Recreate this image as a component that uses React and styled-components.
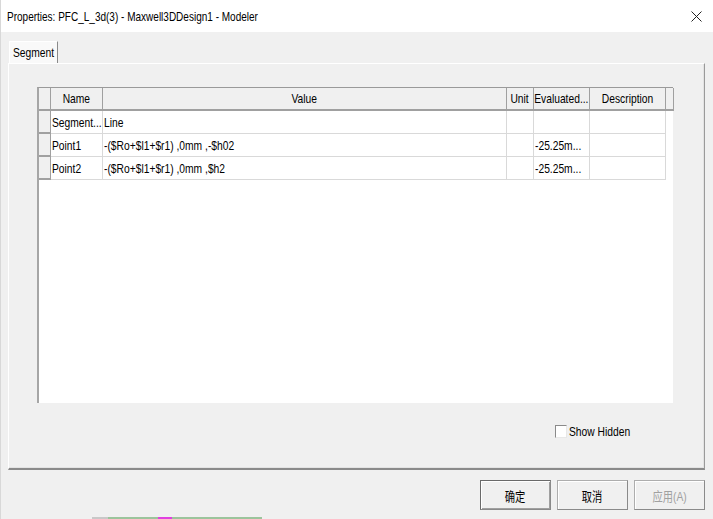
import React from "react";
import styled, { createGlobalStyle } from "styled-components";

const GlobalStyle = createGlobalStyle`
    html, body {
        margin: 0;
        padding: 0;
        background: #f0f0f0;
    }
    body {
        font-family: "Liberation Sans", "Noto Sans CJK SC", sans-serif;
        font-size: 13px;
        color: #000;
    }
`;

// the dialog font is a narrow one, so squeeze the text horizontally
const Narrow = styled.span`
    display: inline-block;
    white-space: nowrap;
    transform: scaleX(${(p) => p.$scale || 0.79});
    transform-origin: ${(p) => p.$origin || "left"} center;
`;

const Window = styled.div`
    width: 713px;
    height: 519px;
    display: flex;
    flex-direction: column;
    background: #f0f0f0;
    border-left: 1px solid #d8d8d8;
    box-sizing: border-box;
    overflow: hidden;
`;

const TitleBar = styled.div`
    height: 32px;
    flex: none;
    display: flex;
    align-items: center;
    justify-content: space-between;
    padding-left: 6px;
    background: #fff;
`;

const CloseBtn = styled.div`
    width: 32px;
    height: 32px;
    display: flex;
    align-items: center;
    justify-content: center;
    margin-right: 1px;
`;

const Body = styled.div`
    flex: 1;
    display: flex;
    flex-direction: column;
    padding: 9px 8px 0 7px;
`;

const TabStrip = styled.div`
    display: flex;
    height: 22px;
    flex: none;
`;

const Tab = styled.div`
    width: 49px;
    box-sizing: border-box;
    padding-left: 3px;
    display: flex;
    align-items: center;
    background: #f9f9f9;
    border-left: 1px solid #fff;
    border-top: 1px solid #fff;
    border-right: 1px solid #8a8a8a;
    margin-left: 1px;
    overflow: hidden;
`;

const Panel = styled.div`
    flex: none;
    height: 407px;
    box-sizing: border-box;
    display: flex;
    flex-direction: column;
    border-top: 1px solid #fff;
    border-left: 1px solid #fff;
    border-right: 1px solid #9a9a9a;
    border-bottom: 2px solid #8a8a8a;
    box-shadow: inset -1px -1px 0 #e3e3e3;
    padding: 23px 0 0 28px;
`;

const Grid = styled.div`
    width: 636px;
    height: 316px;
    box-sizing: border-box;
    background: #fff;
    border-top: 1px solid #9a9a9a;
    border-left: 2px solid #a6a6a6;
    display: grid;
    grid-template-columns: 12px 52px 404px 27px 56px 76px 8px;
    grid-auto-rows: 23px;
    align-content: start;
`;

const HeadCell = styled.div`
    background: #f0f0f0;
    border-right: 1px solid #a0a0a0;
    border-bottom: 2px solid #a0a0a0;
    display: flex;
    align-items: center;
    justify-content: center;
    overflow: hidden;
`;

const RowHead = styled.div`
    background: #f0f0f0;
    border-right: 1px solid #a0a0a0;
    border-bottom: 2px solid #a0a0a0;
`;

const Cell = styled.div`
    border-right: 1px solid #d9d9d9;
    border-bottom: 1px solid #d9d9d9;
    display: flex;
    align-items: center;
    padding-left: 1px;
    overflow: hidden;
`;

const Filler = styled.div``;

const OptionRow = styled.div`
    display: flex;
    align-items: center;
    margin-top: 21px;
    padding-left: 518px;
    gap: 2px;
`;

const CheckBox = styled.span`
    width: 10px;
    height: 11px;
    flex: none;
    background: #fff;
    border: 1px solid #8a8a8a;
    border-right-color: #e8e8e8;
    border-bottom-color: #e8e8e8;
`;

const ButtonRow = styled.div`
    display: flex;
    justify-content: flex-end;
    gap: 6px;
    margin-top: 10px;
    flex: none;
`;

const Button = styled.button`
    width: 71px;
    height: 30px;
    box-sizing: border-box;
    background: #f0f0f0;
    border: 1px solid ${(p) => (p.$default ? "#6a6a6a" : "#adadad")};
    border-right-color: #8a8a8a;
    border-bottom-color: #8a8a8a;
    box-shadow: ${(p) => (p.$default ? "inset 1px 1px 0 #fff, inset -1px -1px 0 #a0a0a0" : "inset 1px 1px 0 #fff")};
    font-family: "Liberation Sans", "Noto Sans CJK SC", sans-serif;
    font-size: 13px;
    color: ${(p) => (p.disabled ? "#a0a0a0" : "#000")};
    padding: 0;
    overflow: hidden;
`;

const Desktop = styled.div`
    margin-top: auto;
    height: 4px;
    display: flex;
    align-items: flex-end;
    padding-left: 84px;
`;

const Strip = styled.div`
    height: 2px;
    width: ${(p) => p.$w}px;
    background: ${(p) => p.$c};
`;

const columns = ["Name", "Value", "Unit", "Evaluated...", "Description"];

const rows = [
    ["Segment...", "Line", "", "", ""],
    ["Point1", "-($Ro+$l1+$r1) ,0mm ,-$h02", "", "-25.25m...", ""],
    ["Point2", "-($Ro+$l1+$r1) ,0mm ,$h2", "", "-25.25m...", ""],
];

const App = () => {
    return (
        <>
            <GlobalStyle />
            <Window>
                <TitleBar>
                    <Narrow $scale={0.77}>Properties: PFC_L_3d(3) - Maxwell3DDesign1 - Modeler</Narrow>
                    <CloseBtn>
                        <svg width="11" height="11" viewBox="0 0 11 11">
                            <path d="M0.5 0.5 L10.5 10.5 M10.5 0.5 L0.5 10.5" stroke="#222" strokeWidth="1" fill="none" />
                        </svg>
                    </CloseBtn>
                </TitleBar>
                <Body>
                    <TabStrip>
                        <Tab>
                            <Narrow>Segment</Narrow>
                        </Tab>
                    </TabStrip>
                    <Panel>
                        <Grid>
                            <RowHead />
                            {columns.map((c) => (
                                <HeadCell key={c}>
                                    <Narrow $origin="center">{c}</Narrow>
                                </HeadCell>
                            ))}
                            <HeadCell />
                            {rows.map((r, i) => (
                                <React.Fragment key={i}>
                                    <RowHead />
                                    {r.map((c, j) => (
                                        <Cell key={j}>{c && <Narrow>{c}</Narrow>}</Cell>
                                    ))}
                                    <Filler />
                                </React.Fragment>
                            ))}
                        </Grid>
                        <OptionRow>
                            <CheckBox />
                            <Narrow>Show Hidden</Narrow>
                        </OptionRow>
                    </Panel>
                    <ButtonRow>
                        <Button $default>
                            <Narrow $origin="center">确定</Narrow>
                        </Button>
                        <Button>
                            <Narrow $origin="center">取消</Narrow>
                        </Button>
                        <Button disabled>
                            <Narrow $origin="center">应用(A)</Narrow>
                        </Button>
                    </ButtonRow>
                    <Desktop>
                        <Strip $w={16} $c="#c8c8c8" />
                        <Strip $w={50} $c="#9cc49c" />
                        <Strip $w={14} $c="#e040e0" />
                        <Strip $w={90} $c="#9cc49c" />
                    </Desktop>
                </Body>
            </Window>
        </>
    );
};

export default App;
